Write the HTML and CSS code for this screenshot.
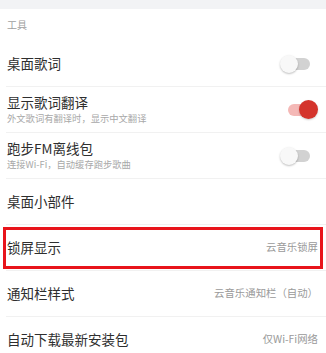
FILE: index.html
```html
<!DOCTYPE html>
<html lang="zh">
<head>
<meta charset="utf-8">
<link rel="stylesheet" href="styles.css">
</head>
<body>
<div class="topband"></div>
<div class="section">
  <div class="section-title">工具</div>
  <div class="row">
    <div class="text"><div class="title">桌面歌词</div></div>
    <div class="toggle"><span class="track"></span><span class="thumb"></span></div>
  </div>
  <div class="row">
    <div class="text"><div class="title">显示歌词翻译</div><div class="sub">外文歌词有翻译时，显示中文翻译</div></div>
    <div class="toggle on"><span class="track"></span><span class="thumb"></span></div>
  </div>
  <div class="row">
    <div class="text"><div class="title">跑步FM离线包</div><div class="sub">连接Wi-Fi，自动缓存跑步歌曲</div></div>
    <div class="toggle"><span class="track"></span><span class="thumb"></span></div>
  </div>
  <div class="row">
    <div class="text"><div class="title">桌面小部件</div></div>
  </div>
  <div class="row highlighted">
    <div class="text"><div class="title">锁屏显示</div></div>
    <div class="value">云音乐锁屏</div>
    <div class="mark"></div>
  </div>
  <div class="row">
    <div class="text"><div class="title">通知栏样式</div></div>
    <div class="value">云音乐通知栏（自动）</div>
  </div>
  <div class="row">
    <div class="text"><div class="title">自动下载最新安装包</div></div>
    <div class="value">仅Wi-Fi网络</div>
  </div>
</div>
</body>
</html>
```
FILE: styles.css
```css
html, body {
  margin: 0;
  padding: 0;
  background: #fff;
  font-family: "Noto Sans CJK SC", "Noto Sans", sans-serif;
  width: 326px;
  height: 353px;
  overflow: hidden;
}
.topband {
  height: 9px;
  background: #f2f3f5;
}
.section {
  background: #fff;
}
.section-title {
  height: 32px;
  display: flex;
  align-items: center;
  padding-left: 7px;
  font-size: 10px;
  color: #a0a0a0;
  line-height: 1;
}
.row {
  position: relative;
  height: 45px;
  margin-left: 6px;
  padding-left: 1px;
  padding-right: 8px;
  border-bottom: 1px solid #f1f1f1;
  display: flex;
  align-items: center;
  justify-content: space-between;
}
.text {
  display: flex;
  flex-direction: column;
}
.title {
  font-size: 13.5px;
  line-height: 17px;
  color: #2e2e2e;
}
.sub {
  font-size: 9.3px;
  line-height: 14px;
  color: #a8a8a8;
}
.value {
  font-size: 10.4px;
  color: #9a9a9a;
  line-height: 1;
}
.toggle {
  position: relative;
  width: 38px;
  height: 20px;
}
.track {
  position: absolute;
  left: 9px;
  right: 8px;
  top: 4px;
  height: 12px;
  border-radius: 6px;
  background: #d2d2d2;
}
.thumb {
  position: absolute;
  left: 0;
  top: 1px;
  width: 18px;
  height: 18px;
  border-radius: 50%;
  background: #f8f8f8;
  box-shadow: 0 1px 2px rgba(0,0,0,0.25);
}
.toggle.on .track {
  left: 8px;
  right: 9px;
  background: #f4b8b6;
}
.toggle.on .thumb {
  left: auto;
  right: 0;
  top: 0;
  width: 19px;
  height: 19px;
  background: #d4342c;
  box-shadow: 0 1px 2px rgba(0,0,0,0.2);
}
.mark {
  position: absolute;
  left: -3px;
  right: 3px;
  top: 2px;
  height: 42px;
  border: 3px solid #e8141b;
  box-sizing: border-box;
}
```
